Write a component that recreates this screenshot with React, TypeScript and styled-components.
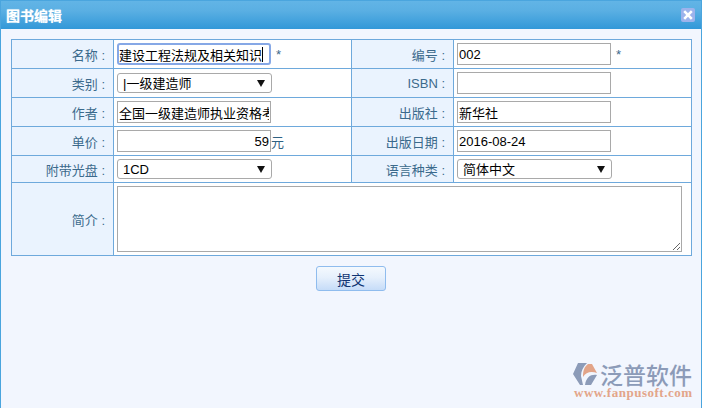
import React from "react";
import styled, { createGlobalStyle } from "styled-components";

const Global = createGlobalStyle`
  html, body { margin: 0; padding: 0; background: #f2f6fe; }
  * { box-sizing: border-box; }
`;
const FONT = `"Liberation Sans", "Noto Sans CJK SC", sans-serif`;

const Dialog = styled.div`
  position: relative;
  width: 702px;
  height: 408px;
  display: flex;
  flex-direction: column;
  background: #f2f6fe;
  border: 1px solid #4aa5de;
  border-top: 0;
  border-bottom: 0;
  font-family: ${FONT};
  font-size: 13px;
  overflow: hidden;
`;
const TitleBar = styled.div`
  flex: none;
  height: 29px;
  margin: 0 -1px;
  padding: 0 7px 0 6px;
  display: flex;
  align-items: center;
  justify-content: space-between;
  background: linear-gradient(#62b4e6, #5aafe3 35%, #3298d8);
  border-top: 1px solid #4aa5de;
`;
const Title = styled.span`
  color: #fff;
  font-size: 14px;
  font-weight: 700;
  text-shadow: 0 0 1px #ffffffaa;
`;
const Close = styled.svg`
  display: block;
  width: 14px;
  height: 14px;
`;
const Content = styled.div`
  flex: 1;
  padding: 10px 10px 0;
  display: flex;
  flex-direction: column;
  align-items: flex-start;
`;
const Form = styled.table`
  width: 680px;
  table-layout: fixed;
  border-collapse: collapse;
  border: 1px solid #6ea9dc;
`;
const Row = styled.tr<{ $h: number }>`
  height: ${(p) => p.$h}px;
`;
const Label = styled.td`
  width: 102px;
  padding: 0 8px 0 0;
  text-align: right;
  vertical-align: middle;
  background: #eaf3fe;
  border: 1px solid #6ea9dc;
  color: #3b6a8c;
  font-size: 13px;
  white-space: nowrap;
`;
const Cell = styled.td`
  width: 238px;
  padding: 0 0 0 3px;
  vertical-align: middle;
  background: #fff;
  border: 1px solid #6ea9dc;
  color: #2f6283;
  white-space: nowrap;
`;
const FieldWrap = styled.span`
  position: relative;
  display: inline-block;
  vertical-align: middle;
`;
const TextInput = styled.input<{ $focus?: boolean; $right?: boolean }>`
  display: block;
  width: 154px;
  height: 22px;
  padding: 0 1px;
  margin: 0;
  border: ${(p) => (p.$focus ? "2px solid #86a8e6" : "1px solid #a9a9a9")};
  border-radius: ${(p) => (p.$focus ? "3px" : "0")};
  padding-left: ${(p) => (p.$focus ? "0" : "1px")};
  background: #fff;
  color: #000;
  font-family: ${FONT};
  font-size: 13px;
  text-align: ${(p) => (p.$right ? "right" : "left")};
  outline: none;
`;
const Caret = styled.span`
  position: absolute;
  left: 145px;
  top: 4px;
  width: 1px;
  height: 15px;
  background: #000;
`;
const Dropdown = styled.select`
  display: block;
  width: 155px;
  height: 20px;
  padding: 0 0 0 5px;
  margin: 0;
  appearance: none;
  border: 1px solid #a9a9a9;
  border-radius: 3px;
  background: #fff;
  color: #000;
  font-family: ${FONT};
  font-size: 13px;
  outline: none;
`;
const Arrow = styled.span`
  position: absolute;
  right: 7px;
  top: 7px;
  width: 0;
  height: 0;
  border-left: 4px solid transparent;
  border-right: 4px solid transparent;
  border-top: 7px solid #111;
  pointer-events: none;
`;
const Mark = styled.span`
  margin-left: 5px;
  vertical-align: middle;
  color: #3b6a8c;
`;
const Unit = styled.span`
  vertical-align: middle;
  color: #2f6283;
`;
const Notes = styled.textarea`
  display: block;
  width: 565px;
  height: 66px;
  margin: 0;
  padding: 2px;
  border: 1px solid #a9a9a9;
  background: #fff;
  outline: none;
  resize: both;
`;
const Actions = styled.div`
  align-self: stretch;
  display: flex;
  justify-content: center;
  padding: 10px 0 0;
`;
const Submit = styled.button`
  width: 70px;
  height: 25px;
  padding: 0;
  border: 1px solid #8fbcee;
  border-radius: 3px;
  background: linear-gradient(#f4f9fe, #e6f0fc 45%, #c6dcf8);
  color: #0f3472;
  font-family: ${FONT};
  font-size: 14px;
`;
const Logo = styled.div`
  position: absolute;
  left: 572px;
  top: 362px;
  width: 124px;
  display: grid;
  grid-template-columns: 27px 1fr;
  grid-template-rows: 24px 14px;
  align-items: center;
`;
const LogoMark = styled.svg`
  display: block;
  width: 25px;
  height: 24px;
`;
const LogoName = styled.span`
  font-family: "Noto Sans CJK SC", sans-serif;
  font-size: 23px;
  line-height: 24px;
  font-weight: 500;
  color: #8c9bb8;
  white-space: nowrap;
`;
const LogoUrl = styled.span`
  grid-column: 1 / 3;
  padding-left: 1px;
  font-family: "Liberation Serif", serif;
  font-size: 13px;
  line-height: 12px;
  font-weight: 700;
  letter-spacing: 0.52px;
  color: #e3a58a;
  white-space: nowrap;
`;

export default function App() {
  return (
    <>
      <Global />
      <Dialog>
        <TitleBar>
          <Title>图书编辑</Title>
          <Close viewBox="0 0 14 14">
            <rect width="14" height="14" rx="2" fill="#9db3ec" />
            <path d="M3.2 3.2 10.8 10.8M10.8 3.2 3.2 10.8" stroke="#fff" strokeWidth="2.6" />
          </Close>
        </TitleBar>
        <Content>
          <Form>
            <tbody>
              <Row $h={29}>
                <Label>名称 :</Label>
                <Cell>
                  <FieldWrap>
                    <TextInput $focus readOnly value="建设工程法规及相关知识" />
                    <Caret />
                  </FieldWrap>
                  <Mark>*</Mark>
                </Cell>
                <Label>编号 :</Label>
                <Cell>
                  <FieldWrap><TextInput readOnly value="002" /></FieldWrap>
                  <Mark>*</Mark>
                </Cell>
              </Row>
              <Row $h={29}>
                <Label>类别 :</Label>
                <Cell>
                  <FieldWrap>
                    <Dropdown defaultValue="a"><option value="a">|一级建造师</option></Dropdown>
                    <Arrow />
                  </FieldWrap>
                </Cell>
                <Label>ISBN :</Label>
                <Cell><FieldWrap><TextInput readOnly value="" /></FieldWrap></Cell>
              </Row>
              <Row $h={29}>
                <Label>作者 :</Label>
                <Cell><FieldWrap><TextInput readOnly value="全国一级建造师执业资格考试用书" /></FieldWrap></Cell>
                <Label>出版社 :</Label>
                <Cell><FieldWrap><TextInput readOnly value="新华社" /></FieldWrap></Cell>
              </Row>
              <Row $h={29}>
                <Label>单价 :</Label>
                <Cell>
                  <FieldWrap><TextInput $right readOnly value="59" /></FieldWrap>
                  <Unit>元</Unit>
                </Cell>
                <Label>出版日期 :</Label>
                <Cell><FieldWrap><TextInput readOnly value="2016-08-24" /></FieldWrap></Cell>
              </Row>
              <Row $h={27}>
                <Label>附带光盘 :</Label>
                <Cell>
                  <FieldWrap>
                    <Dropdown defaultValue="a"><option value="a">1CD</option></Dropdown>
                    <Arrow />
                  </FieldWrap>
                </Cell>
                <Label>语言种类 :</Label>
                <Cell>
                  <FieldWrap>
                    <Dropdown defaultValue="a"><option value="a">简体中文</option></Dropdown>
                    <Arrow />
                  </FieldWrap>
                </Cell>
              </Row>
              <Row $h={73}>
                <Label>简介 :</Label>
                <Cell colSpan={3}><FieldWrap><Notes /></FieldWrap></Cell>
              </Row>
            </tbody>
          </Form>
          <Actions>
            <Submit type="button">提交</Submit>
          </Actions>
        </Content>
        <Logo>
          <LogoMark viewBox="0 0 25 24">
            <path d="M5 1H14C10 5 8 9 8 14L10 23H7L0 12Z" fill="#8c9bb8" />
            <path d="M15 2H19L24 11C18 9 13 10 10 15 10 9 11 5 15 2Z" fill="#e2a488" />
            <path d="M12 23H18L24 13C18 12 13 15 12 23Z" fill="#8c9bb8" />
          </LogoMark>
          <LogoName>泛普软件</LogoName>
          <LogoUrl>www.fanpusoft.com</LogoUrl>
        </Logo>
      </Dialog>
    </>
  );
}
